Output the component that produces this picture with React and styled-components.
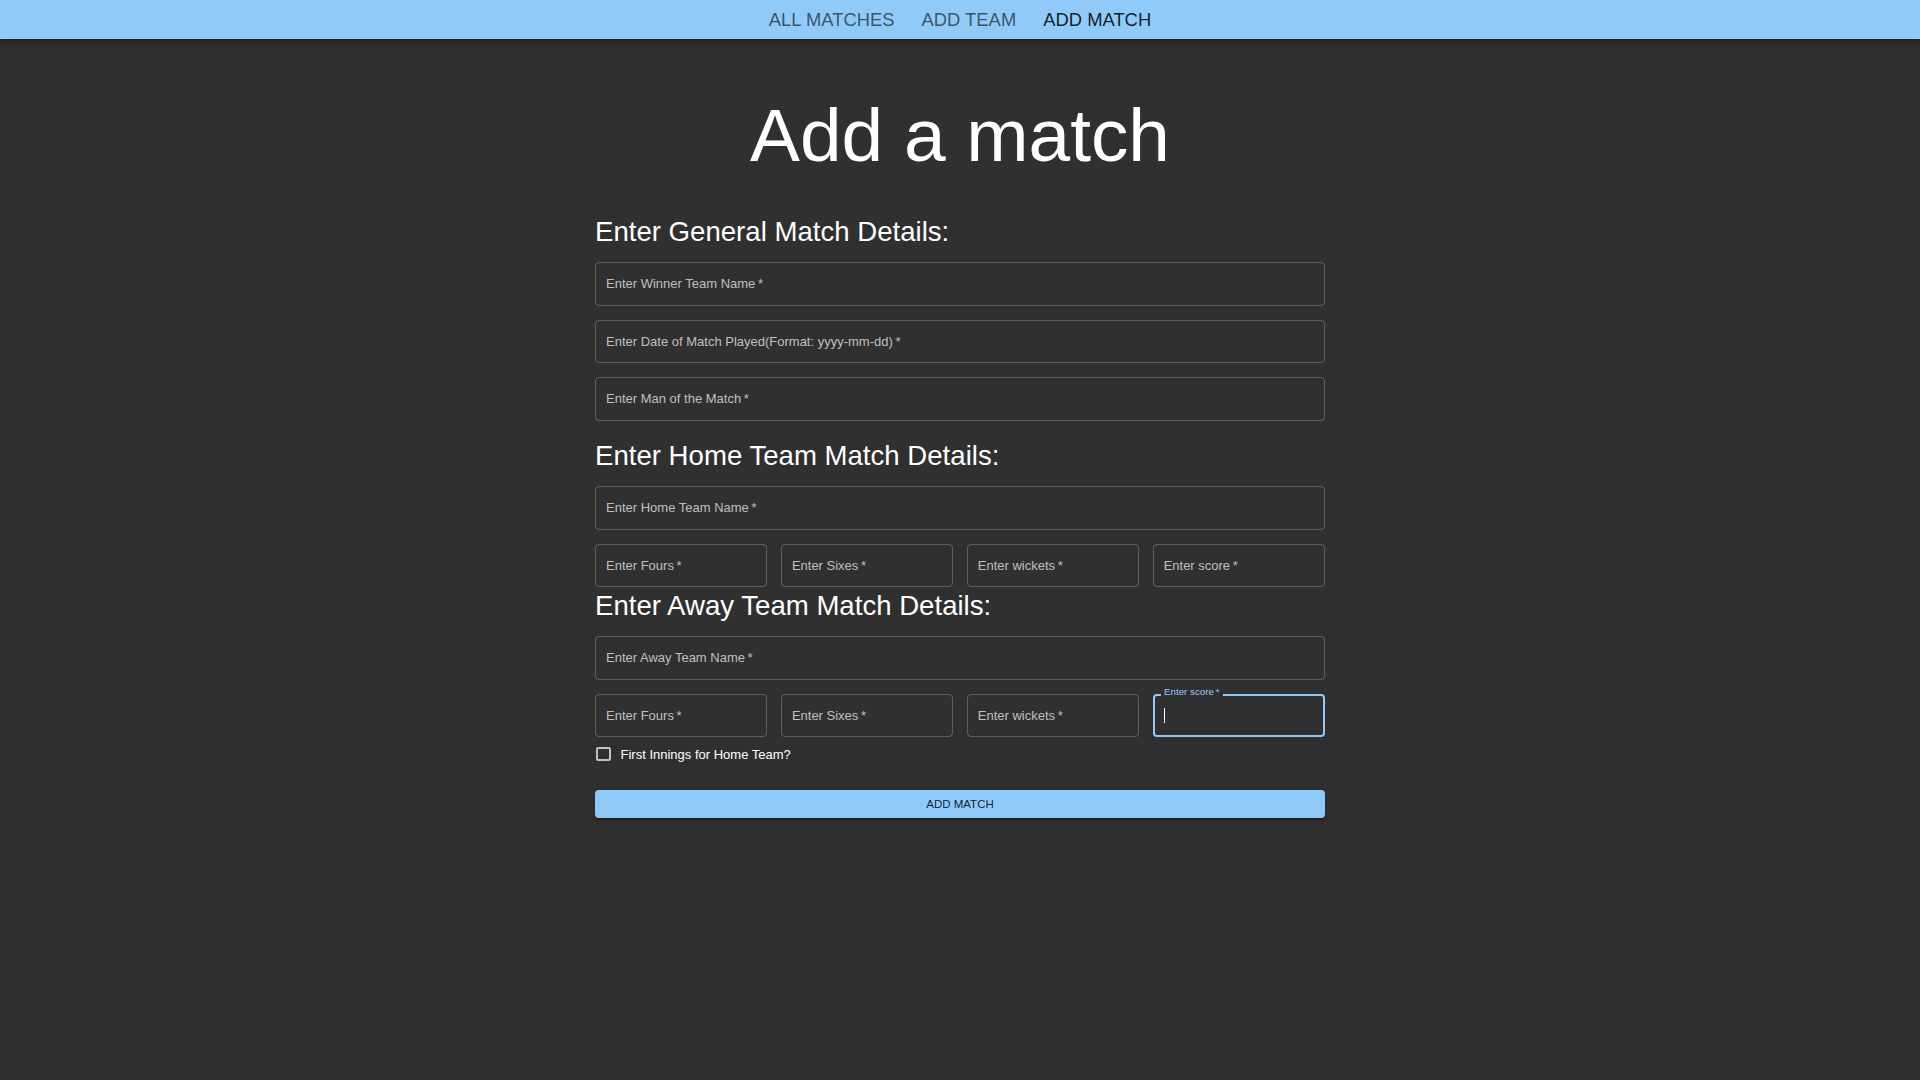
import React from 'react';
import styled, { createGlobalStyle } from 'styled-components';

const GlobalStyle = createGlobalStyle`
  body {
    margin: 0;
    background: #303030;
    font-family: "Liberation Sans", Arial, sans-serif;
    color: #fff;
  }
`;

const NavBar = styled.nav`
  height: 39px;
  background: #90caf9;
  display: flex;
  align-items: center;
  justify-content: center;
  gap: 27px;
  box-shadow: 0 2px 4px -1px rgba(0, 0, 0, 0.2), 0 4px 5px 0 rgba(0, 0, 0, 0.14),
    0 1px 10px 0 rgba(0, 0, 0, 0.12);
`;

const NavLink = styled.a`
  font-size: 18.4px;
  line-height: 18px;
  text-transform: uppercase;
  text-decoration: none;
  color: ${({ $active }) => ($active ? 'rgba(0, 0, 0, 0.87)' : 'rgba(0, 0, 0, 0.6)')};
  cursor: pointer;
`;

const Page = styled.main`
  width: 730px;
  margin: 0 auto;
  padding-bottom: 40px;
`;

const Title = styled.h1`
  margin: 52px 0 0;
  font-size: 74.8px;
  line-height: 88px;
  font-weight: 400;
  text-align: center;
  color: #fff;
`;

const Section = styled.section`
  display: flex;
  flex-direction: column;
  gap: 14px;
  margin-top: ${({ $top }) => $top}px;
`;

const Heading = styled.h4`
  margin: 0 0 -1px;
  padding-top: 1px;
  font-size: 27.6px;
  line-height: 34px;
  font-weight: 400;
  color: #fff;
`;

const Row = styled.div`
  display: grid;
  grid-template-columns: repeat(4, 1fr);
  gap: 13.5px;
`;

const Field = styled.div`
  position: relative;
  box-sizing: border-box;
  height: 43.5px;
  display: flex;
  align-items: center;
  padding-left: ${({ $focused }) => ($focused ? '9px' : '10px')};
  border: ${({ $focused }) => ($focused ? '2px solid #90caf9' : '1px solid rgba(255, 255, 255, 0.23)')};
  border-radius: 4px;
`;

const Placeholder = styled.span`
  font-size: 13px;
  color: rgba(255, 255, 255, 0.7);
  white-space: nowrap;
`;

const FloatLabel = styled.span`
  position: absolute;
  left: 6.4px;
  top: -9.4px;
  padding: 0 3px;
  font-size: 9.75px;
  line-height: 12px;
  color: #90caf9;
  background: #303030;
`;

const Caret = styled.span`
  width: 1px;
  height: 15px;
  background: #fff;
`;

const CheckRow = styled.label`
  display: flex;
  align-items: center;
  gap: 10px;
  height: 24px;
  margin-top: 5px;
  padding-left: 1px;
  font-size: 13px;
  color: #fff;
`;

const CheckBox = styled.span`
  box-sizing: border-box;
  width: 14.5px;
  height: 14px;
  border: 2px solid rgba(255, 255, 255, 0.7);
  border-radius: 2px;
`;

const SubmitButton = styled.button`
  display: block;
  width: 100%;
  height: 28px;
  margin-top: 24px;
  border: none;
  border-radius: 4px;
  background: #90caf9;
  color: rgba(0, 0, 0, 0.87);
  font-family: "Liberation Sans", Arial, sans-serif;
  font-size: 11.5px;
  text-transform: uppercase;
  box-shadow: 0 3px 1px -2px rgba(0, 0, 0, 0.2), 0 2px 2px 0 rgba(0, 0, 0, 0.14),
    0 1px 5px 0 rgba(0, 0, 0, 0.12);
`;

const TextField = ({ label }) => (
  <Field>
    <Placeholder>{label}{'\u2009*'}</Placeholder>
  </Field>
);

const FocusedField = ({ label }) => (
  <Field $focused>
    <FloatLabel>{label}{'\u2009*'}</FloatLabel>
    <Caret />
  </Field>
);

const stats = ['Enter Fours', 'Enter Sixes', 'Enter wickets'];

const App = () => (
  <>
    <GlobalStyle />
    <NavBar>
      <NavLink>All Matches</NavLink>
      <NavLink>Add Team</NavLink>
      <NavLink $active>Add Match</NavLink>
    </NavBar>
    <Page>
      <Title>Add a match</Title>

      <Section $top={35}>
        <Heading>Enter General Match Details:</Heading>
        <TextField label="Enter Winner Team Name" />
        <TextField label="Enter Date of Match Played(Format: yyyy-mm-dd)" />
        <TextField label="Enter Man of the Match" />
      </Section>

      <Section $top={17.5}>
        <Heading>Enter Home Team Match Details:</Heading>
        <TextField label="Enter Home Team Name" />
        <Row>
          {stats.map((s) => (
            <TextField key={s} label={s} />
          ))}
          <TextField label="Enter score" />
        </Row>
      </Section>

      <Section $top={1}>
        <Heading>Enter Away Team Match Details:</Heading>
        <TextField label="Enter Away Team Name" />
        <Row>
          {stats.map((s) => (
            <TextField key={s} label={s} />
          ))}
          <FocusedField label="Enter score" />
        </Row>
      </Section>

      <CheckRow>
        <CheckBox />
        First Innings for Home Team?
      </CheckRow>
      <SubmitButton>Add Match</SubmitButton>
    </Page>
  </>
);

export default App;
